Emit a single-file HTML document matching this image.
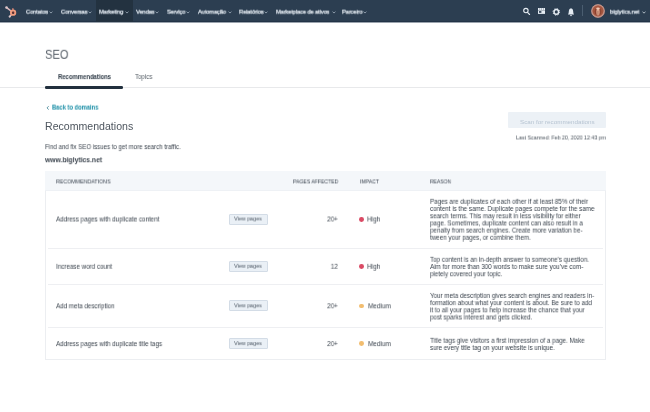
<!DOCTYPE html>
<html><head><meta charset="utf-8"><style>
html,body{margin:0;padding:0;width:650px;height:412px;overflow:hidden;background:#fff}
body{position:relative;font-family:"Liberation Sans",sans-serif;filter:blur(0.45px)}
.t{position:absolute;white-space:pre}
.b{position:absolute}
</style></head><body>
<div class="b" style="left:0px;top:0px;width:650px;height:22px;background:#2c3e51"></div>
<div class="b" style="left:0px;top:21px;width:650px;height:1px;background:#223346"></div>
<div class="b" style="left:0px;top:22px;width:650px;height:1px;background:#9aa3ad"></div>
<div class="b" style="left:96px;top:0px;width:36.7px;height:22px;background:#233240"></div>
<svg class="b" style="left:0px;top:0px" width="22" height="22" viewBox="0 0 22 22">
<g stroke-linecap="round">
<line x1="11.2" y1="11.2" x2="6.6" y2="7.6" stroke="#d9b8bd" stroke-width="1.5"/>
<line x1="11.8" y1="14.2" x2="9.8" y2="16.5" stroke="#d9bcc0" stroke-width="1.4"/>
<line x1="13" y1="10.2" x2="12.9" y2="8.6" stroke="#e08a78" stroke-width="1.3"/>
</g>
<circle cx="6.5" cy="7.5" r="1.3" fill="#dcc4c8"/>
<circle cx="9.7" cy="16.6" r="1.1" fill="#d8c4c8"/>
<circle cx="13.1" cy="12.7" r="2.2" fill="none" stroke="#f09a7c" stroke-width="1.9"/>
<circle cx="13.1" cy="12.7" r="0.9" fill="#7a2a22"/>
</svg>
<div class="t" style="left:26.00px;top:9.00px;font-size:6.2675px;line-height:6.2675px;font-weight:400;color:#e5ecf3;letter-spacing:-0.13px;-webkit-text-stroke:0.25px #e5ecf3;transform:translate3d(0,-0.40px,0) scaleX(0.9174);will-change:transform;transform-origin:left top;">Contatos</div>
<svg class="b" style="left:49.10px;top:10.6px" width="4" height="3" viewBox="0 0 4 3"><path d="M0.6 0.6 L2 2.1 L3.4 0.6" stroke="#aab8c6" stroke-width="0.75" fill="none"/></svg>
<div class="t" style="left:60.60px;top:9.00px;font-size:6.2675px;line-height:6.2675px;font-weight:400;color:#e5ecf3;letter-spacing:-0.13px;-webkit-text-stroke:0.25px #e5ecf3;transform:translate3d(0,-0.40px,0) scaleX(0.9174);will-change:transform;transform-origin:left top;">Conversas</div>
<svg class="b" style="left:87.50px;top:10.6px" width="4" height="3" viewBox="0 0 4 3"><path d="M0.6 0.6 L2 2.1 L3.4 0.6" stroke="#aab8c6" stroke-width="0.75" fill="none"/></svg>
<div class="t" style="left:98.90px;top:9.00px;font-size:6.2675px;line-height:6.2675px;font-weight:400;color:#e5ecf3;letter-spacing:-0.13px;-webkit-text-stroke:0.25px #e5ecf3;transform:translate3d(0,-0.40px,0) scaleX(0.9174);will-change:transform;transform-origin:left top;">Marketing</div>
<svg class="b" style="left:125.10px;top:10.6px" width="4" height="3" viewBox="0 0 4 3"><path d="M0.6 0.6 L2 2.1 L3.4 0.6" stroke="#aab8c6" stroke-width="0.75" fill="none"/></svg>
<div class="t" style="left:136.20px;top:9.00px;font-size:6.2675px;line-height:6.2675px;font-weight:400;color:#e5ecf3;letter-spacing:-0.13px;-webkit-text-stroke:0.25px #e5ecf3;transform:translate3d(0,-0.40px,0) scaleX(0.9174);will-change:transform;transform-origin:left top;">Vendas</div>
<svg class="b" style="left:155.10px;top:10.6px" width="4" height="3" viewBox="0 0 4 3"><path d="M0.6 0.6 L2 2.1 L3.4 0.6" stroke="#aab8c6" stroke-width="0.75" fill="none"/></svg>
<div class="t" style="left:167.10px;top:9.00px;font-size:6.2675px;line-height:6.2675px;font-weight:400;color:#e5ecf3;letter-spacing:-0.13px;-webkit-text-stroke:0.25px #e5ecf3;transform:translate3d(0,-0.40px,0) scaleX(0.9174);will-change:transform;transform-origin:left top;">Serviço</div>
<svg class="b" style="left:186.30px;top:10.6px" width="4" height="3" viewBox="0 0 4 3"><path d="M0.6 0.6 L2 2.1 L3.4 0.6" stroke="#aab8c6" stroke-width="0.75" fill="none"/></svg>
<div class="t" style="left:197.50px;top:9.00px;font-size:6.2675px;line-height:6.2675px;font-weight:400;color:#e5ecf3;letter-spacing:-0.13px;-webkit-text-stroke:0.25px #e5ecf3;transform:translate3d(0,-0.40px,0) scaleX(0.9174);will-change:transform;transform-origin:left top;">Automação</div>
<svg class="b" style="left:227.50px;top:10.6px" width="4" height="3" viewBox="0 0 4 3"><path d="M0.6 0.6 L2 2.1 L3.4 0.6" stroke="#aab8c6" stroke-width="0.75" fill="none"/></svg>
<div class="t" style="left:238.60px;top:9.00px;font-size:6.2675px;line-height:6.2675px;font-weight:400;color:#e5ecf3;letter-spacing:-0.13px;-webkit-text-stroke:0.25px #e5ecf3;transform:translate3d(0,-0.40px,0) scaleX(0.9174);will-change:transform;transform-origin:left top;">Relatórios</div>
<svg class="b" style="left:264.40px;top:10.6px" width="4" height="3" viewBox="0 0 4 3"><path d="M0.6 0.6 L2 2.1 L3.4 0.6" stroke="#aab8c6" stroke-width="0.75" fill="none"/></svg>
<div class="t" style="left:275.90px;top:9.00px;font-size:6.2675px;line-height:6.2675px;font-weight:400;color:#e5ecf3;letter-spacing:-0.13px;-webkit-text-stroke:0.25px #e5ecf3;transform:translate3d(0,-0.40px,0) scaleX(0.9174);will-change:transform;transform-origin:left top;">Marketplace de ativos</div>
<svg class="b" style="left:331.60px;top:10.6px" width="4" height="3" viewBox="0 0 4 3"><path d="M0.6 0.6 L2 2.1 L3.4 0.6" stroke="#aab8c6" stroke-width="0.75" fill="none"/></svg>
<div class="t" style="left:342.40px;top:9.00px;font-size:6.2675px;line-height:6.2675px;font-weight:400;color:#e5ecf3;letter-spacing:-0.13px;-webkit-text-stroke:0.25px #e5ecf3;transform:translate3d(0,-0.40px,0) scaleX(0.9174);will-change:transform;transform-origin:left top;">Parceiro</div>
<svg class="b" style="left:363.30px;top:10.6px" width="4" height="3" viewBox="0 0 4 3"><path d="M0.6 0.6 L2 2.1 L3.4 0.6" stroke="#aab8c6" stroke-width="0.75" fill="none"/></svg>
<svg class="b" style="left:520px;top:5px" width="14" height="14" viewBox="0 0 14 14"><circle cx="5.9" cy="5.6" r="2.2" stroke="#e5ecf3" stroke-width="1.1" fill="none"/><line x1="7.5" y1="7.3" x2="9.6" y2="9.5" stroke="#e5ecf3" stroke-width="1.1" stroke-linecap="round"/></svg>
<svg class="b" style="left:538px;top:8.2px" width="7.2" height="6" viewBox="0 0 7.2 6"><rect x="0" y="0" width="7.1" height="5.9" fill="#e5ecf3"/><rect x="1.3" y="0.5" width="0.8" height="1" fill="#2c3e51" opacity="0.7"/><rect x="3.2" y="0.5" width="0.8" height="1" fill="#2c3e51" opacity="0.7"/><rect x="5.1" y="0.5" width="0.8" height="1" fill="#2c3e51" opacity="0.7"/><rect x="0" y="2" width="7.1" height="0.6" fill="#2c3e51" opacity="0.5"/><rect x="1" y="3.1" width="2.4" height="1.7" fill="#2c3e51"/></svg>
<svg class="b" style="left:552px;top:8px" width="9" height="8" viewBox="0 0 9 8"><circle cx="4.3" cy="3.9" r="2.3" stroke="#e5ecf3" stroke-width="1.5" fill="none"/><circle cx="4.3" cy="3.9" r="3.3" stroke="#e5ecf3" stroke-width="1" stroke-dasharray="1.2 1.4" fill="none"/></svg>
<svg class="b" style="left:566.5px;top:7.5px" width="8" height="9" viewBox="0 0 8 9"><path d="M0.9 6.6 C1.8 5.8 1.7 4 1.9 2.8 C2.1 1.2 2.9 0.6 4 0.6 C5.1 0.6 5.9 1.2 6.1 2.8 C6.3 4 6.2 5.8 7.1 6.6 Z" fill="#e5ecf3"/><rect x="3.3" y="6.9" width="1.4" height="1.2" fill="#e5ecf3"/></svg>
<div class="b" style="left:582px;top:5px;width:0.8px;height:11px;background:#4a5d70"></div>
<svg class="b" style="left:590.7px;top:4.2px" width="14" height="14" viewBox="0 0 14 14"><circle cx="7" cy="7" r="6.8" fill="#b57a6c"/><circle cx="7" cy="7" r="6.3" fill="none" stroke="#dcbcb4" stroke-width="0.7" opacity="0.8"/><circle cx="7" cy="6.8" r="5.4" fill="#a5563f"/><ellipse cx="5" cy="7.5" rx="1.3" ry="3" fill="#8a3f2e"/><ellipse cx="9" cy="7.5" rx="1.3" ry="3" fill="#8f4632"/><ellipse cx="7" cy="7.8" rx="1.7" ry="3.6" fill="#dca58c"/><ellipse cx="7" cy="4.5" rx="1.8" ry="1.1" fill="#f2cab6"/><rect x="6.6" y="7" width="0.7" height="4" fill="#7a3a2a" opacity="0.6"/></svg>
<div class="t" style="left:609.60px;top:9.00px;font-size:6.2675px;line-height:6.2675px;font-weight:400;color:#e5ecf3;letter-spacing:-0.05px;-webkit-text-stroke:0.25px #e5ecf3;transform:translate3d(0,-0.40px,0) scaleX(0.9174);will-change:transform;transform-origin:left top;">biglytics.net</div>
<svg class="b" style="left:641.5px;top:10.8px" width="4" height="3" viewBox="0 0 4 3"><path d="M0.5 0.6 L2 2.2 L3.5 0.6" stroke="#e5ecf3" stroke-width="0.7" fill="none"/></svg>
<div class="t" style="left:45.40px;top:49.00px;font-size:12.096px;line-height:12.096px;font-weight:400;color:#555d66;transform:translate3d(0,-0.20px,0) scaleX(0.9259);will-change:transform;transform-origin:left top;">SEO</div>
<div class="t" style="left:57.70px;top:74.00px;font-size:6.6000000000000005px;line-height:6.6000000000000005px;font-weight:700;color:#2f3b47;letter-spacing:-0.05px;transform:translate3d(0,0.10px,0) scaleX(0.9091);will-change:transform;transform-origin:left top;">Recommendations</div>
<div class="t" style="left:135.00px;top:74.00px;font-size:6.71px;line-height:6.71px;font-weight:400;color:#5b636b;transform:translate3d(0,0.00px,0) scaleX(0.9091);will-change:transform;transform-origin:left top;">Topics</div>
<div class="b" style="left:0px;top:87px;width:650px;height:1px;background:#e8e9eb"></div>
<div class="b" style="left:45px;top:86.4px;width:77.6px;height:2.3px;background:#22303e;border-radius:1.2px"></div>
<div class="t" style="left:51.80px;top:105.00px;font-size:6.38px;line-height:6.38px;font-weight:700;color:#1a8ea6;transform:translate3d(0,-0.40px,0) scaleX(0.9091);will-change:transform;transform-origin:left top;">Back to domains</div>
<svg class="b" style="left:45.5px;top:104.5px" width="4" height="6" viewBox="0 0 4 6"><path d="M2.6 1.2 L1.1 2.9 L2.6 4.6" stroke="#4a8a9a" stroke-width="0.9" fill="none"/></svg>
<div class="t" style="left:45.30px;top:122.00px;font-size:10.176px;line-height:10.176px;font-weight:400;color:#4d555e;transform:translate3d(0,-0.30px,0) scaleX(1.0417);will-change:transform;transform-origin:left top;">Recommendations</div>
<div class="t" style="left:44.90px;top:144.00px;font-size:6.71px;line-height:6.71px;font-weight:400;color:#3a434d;transform:translate3d(0,0.10px,0) scaleX(0.9091);will-change:transform;transform-origin:left top;">Find and fix SEO issues to get more search traffic.</div>
<div class="t" style="left:44.90px;top:156.00px;font-size:7.48px;line-height:7.48px;font-weight:700;color:#3a434d;transform:translate3d(0,0.20px,0) scaleX(0.9091);will-change:transform;transform-origin:left top;">www.biglytics.net</div>
<div class="b" style="left:508.4px;top:112.4px;width:97.7px;height:16.0px;background:#ecf1f6;border-radius:1px"></div>
<div class="t" style="left:520.00px;top:119.00px;font-size:6.25px;line-height:6.25px;font-weight:400;color:#b7c4d2;transform:translate3d(0,-0.40px,0) scaleX(1.0000);will-change:transform;transform-origin:left top;">Scan for recommendations</div>
<div class="t" style="left:515.70px;top:136.00px;font-size:5.83px;line-height:5.83px;font-weight:400;color:#47505a;transform:translate3d(0,-0.50px,0) scaleX(0.9091);will-change:transform;transform-origin:left top;">Last Scanned: Feb 20, 2020 12:43 pm</div>
<div class="b" style="left:45px;top:170.5px;width:560.9px;height:189.2px;border:1px solid #eceef1;box-sizing:border-box;background:#fff"></div>
<div class="b" style="left:45px;top:170.5px;width:560.9px;height:19.3px;background:#f4f7fa"></div>
<div class="b" style="left:45px;top:189.5px;width:560.9px;height:0.8px;background:#eef1f5"></div>
<div class="t" style="left:55.80px;top:179.00px;font-size:5.936px;line-height:5.936px;font-weight:400;color:#3b4450;transform:translate3d(0,0.40px,0) scaleX(0.8929);will-change:transform;transform-origin:left top;">RECOMMENDATIONS</div>
<div class="t" style="left:293.30px;top:179.00px;font-size:5.712px;line-height:5.712px;font-weight:400;color:#3b4450;transform:translate3d(0,0.40px,0) scaleX(0.8929);will-change:transform;transform-origin:left top;">PAGES AFFECTED</div>
<div class="t" style="left:359.50px;top:179.00px;font-size:5.712px;line-height:5.712px;font-weight:400;color:#3b4450;transform:translate3d(0,0.40px,0) scaleX(0.8929);will-change:transform;transform-origin:left top;">IMPACT</div>
<div class="t" style="left:429.50px;top:179.00px;font-size:5.6000000000000005px;line-height:5.6000000000000005px;font-weight:400;color:#3b4450;transform:translate3d(0,0.40px,0) scaleX(0.8929);will-change:transform;transform-origin:left top;">REASON</div>
<div class="b" style="left:48px;top:248.2px;width:555px;height:1px;background:#eeeff2"></div>
<div class="b" style="left:48px;top:283.6px;width:555px;height:1px;background:#eeeff2"></div>
<div class="b" style="left:48px;top:327.4px;width:555px;height:1px;background:#eeeff2"></div>
<div class="t" style="left:56.00px;top:217.00px;font-size:6.875000000000001px;line-height:6.875000000000001px;font-weight:400;color:#3a434d;transform:translate3d(0,-0.50px,0) scaleX(0.9091);will-change:transform;transform-origin:left top;">Address pages with duplicate content</div>
<div class="b" style="left:228.6px;top:213.60000000000002px;width:39.4px;height:11.0px;background:#eaf0f6;border:0.6px solid #d3dce6;box-sizing:border-box;border-radius:1px"></div>
<div class="t" style="left:234.30px;top:216.00px;font-size:5.670000000000001px;line-height:5.670000000000001px;font-weight:400;color:#4f5a66;transform:translate3d(0,0.50px,0) scaleX(0.9524);will-change:transform;transform-origin:left top;">View pages</div>
<div class="t" style="right:312.20px;top:216.00px;font-size:7.040000000000001px;line-height:7.040000000000001px;font-weight:400;color:#3a434d;transform:translate3d(0,-0.50px,0) scaleX(0.9091);will-change:transform;transform-origin:right top;">20+</div>
<div class="b" style="left:358.90px;top:216.80px;width:4.8px;height:4.8px;border-radius:50%;background:#da4a64"></div>
<div class="t" style="left:367.10px;top:216.00px;font-size:7.040000000000001px;line-height:7.040000000000001px;font-weight:400;color:#3a434d;transform:translate3d(0,-0.50px,0) scaleX(0.9091);will-change:transform;transform-origin:left top;">High</div>
<div class="t" style="left:429.50px;top:199.00px;font-size:6.875000000000001px;line-height:6.875000000000001px;font-weight:400;color:#3a434d;transform:translate3d(0,-0.20px,0) scaleX(0.9091);will-change:transform;transform-origin:left top;">Pages are duplicates of each other if at least 85% of their</div>
<div class="t" style="left:429.50px;top:206.00px;font-size:6.875000000000001px;line-height:6.875000000000001px;font-weight:400;color:#3a434d;transform:translate3d(0,0.00px,0) scaleX(0.9091);will-change:transform;transform-origin:left top;">content is the same. Duplicate pages compete for the same</div>
<div class="t" style="left:429.50px;top:213.00px;font-size:6.875000000000001px;line-height:6.875000000000001px;font-weight:400;color:#3a434d;transform:translate3d(0,0.20px,0) scaleX(0.9091);will-change:transform;transform-origin:left top;">search terms. This may result in less visibility for either</div>
<div class="t" style="left:429.50px;top:220.00px;font-size:6.875000000000001px;line-height:6.875000000000001px;font-weight:400;color:#3a434d;transform:translate3d(0,0.40px,0) scaleX(0.9091);will-change:transform;transform-origin:left top;">page. Sometimes, duplicate content can also result in a</div>
<div class="t" style="left:429.50px;top:228.00px;font-size:6.875000000000001px;line-height:6.875000000000001px;font-weight:400;color:#3a434d;transform:translate3d(0,-0.40px,0) scaleX(0.9091);will-change:transform;transform-origin:left top;">penalty from search engines. Create more variation be-</div>
<div class="t" style="left:429.50px;top:235.00px;font-size:6.875000000000001px;line-height:6.875000000000001px;font-weight:400;color:#3a434d;transform:translate3d(0,-0.20px,0) scaleX(0.9091);will-change:transform;transform-origin:left top;">tween your pages, or combine them.</div>
<div class="t" style="left:56.00px;top:264.00px;font-size:6.875000000000001px;line-height:6.875000000000001px;font-weight:400;color:#3a434d;transform:translate3d(0,-0.20px,0) scaleX(0.9091);will-change:transform;transform-origin:left top;">Increase word count</div>
<div class="b" style="left:228.6px;top:260.90000000000003px;width:39.4px;height:11.0px;background:#eaf0f6;border:0.6px solid #d3dce6;box-sizing:border-box;border-radius:1px"></div>
<div class="t" style="left:234.30px;top:264.00px;font-size:5.670000000000001px;line-height:5.670000000000001px;font-weight:400;color:#4f5a66;transform:translate3d(0,-0.20px,0) scaleX(0.9524);will-change:transform;transform-origin:left top;">View pages</div>
<div class="t" style="right:312.20px;top:263.00px;font-size:7.040000000000001px;line-height:7.040000000000001px;font-weight:400;color:#3a434d;transform:translate3d(0,-0.20px,0) scaleX(0.9091);will-change:transform;transform-origin:right top;">12</div>
<div class="b" style="left:358.90px;top:264.10px;width:4.8px;height:4.8px;border-radius:50%;background:#da4a64"></div>
<div class="t" style="left:367.10px;top:263.00px;font-size:7.040000000000001px;line-height:7.040000000000001px;font-weight:400;color:#3a434d;transform:translate3d(0,-0.20px,0) scaleX(0.9091);will-change:transform;transform-origin:left top;">High</div>
<div class="t" style="left:429.50px;top:257.00px;font-size:6.875000000000001px;line-height:6.875000000000001px;font-weight:400;color:#3a434d;transform:translate3d(0,-0.20px,0) scaleX(0.9091);will-change:transform;transform-origin:left top;">Top content is an in-depth answer to someone’s question.</div>
<div class="t" style="left:429.50px;top:264.00px;font-size:6.875000000000001px;line-height:6.875000000000001px;font-weight:400;color:#3a434d;transform:translate3d(0,0.00px,0) scaleX(0.9091);will-change:transform;transform-origin:left top;">Aim for more than 300 words to make sure you’ve com-</div>
<div class="t" style="left:429.50px;top:271.00px;font-size:6.875000000000001px;line-height:6.875000000000001px;font-weight:400;color:#3a434d;transform:translate3d(0,0.20px,0) scaleX(0.9091);will-change:transform;transform-origin:left top;">pletely covered your topic.</div>
<div class="t" style="left:56.00px;top:303.00px;font-size:6.875000000000001px;line-height:6.875000000000001px;font-weight:400;color:#3a434d;transform:translate3d(0,0.30px,0) scaleX(0.9091);will-change:transform;transform-origin:left top;">Add meta description</div>
<div class="b" style="left:228.6px;top:300.40000000000003px;width:39.4px;height:11.0px;background:#eaf0f6;border:0.6px solid #d3dce6;box-sizing:border-box;border-radius:1px"></div>
<div class="t" style="left:234.30px;top:303.00px;font-size:5.670000000000001px;line-height:5.670000000000001px;font-weight:400;color:#4f5a66;transform:translate3d(0,0.30px,0) scaleX(0.9524);will-change:transform;transform-origin:left top;">View pages</div>
<div class="t" style="right:312.20px;top:302.00px;font-size:7.040000000000001px;line-height:7.040000000000001px;font-weight:400;color:#3a434d;transform:translate3d(0,0.30px,0) scaleX(0.9091);will-change:transform;transform-origin:right top;">20+</div>
<div class="b" style="left:358.90px;top:303.60px;width:4.8px;height:4.8px;border-radius:50%;background:#f2bd6f"></div>
<div class="t" style="left:368.40px;top:302.00px;font-size:7.040000000000001px;line-height:7.040000000000001px;font-weight:400;color:#3a434d;transform:translate3d(0,0.30px,0) scaleX(0.9091);will-change:transform;transform-origin:left top;">Medium</div>
<div class="t" style="left:429.50px;top:293.00px;font-size:6.875000000000001px;line-height:6.875000000000001px;font-weight:400;color:#3a434d;transform:translate3d(0,-0.10px,0) scaleX(0.9091);will-change:transform;transform-origin:left top;">Your meta description gives search engines and readers in-</div>
<div class="t" style="left:429.50px;top:300.00px;font-size:6.875000000000001px;line-height:6.875000000000001px;font-weight:400;color:#3a434d;transform:translate3d(0,0.10px,0) scaleX(0.9091);will-change:transform;transform-origin:left top;">formation about what your content is about. Be sure to add</div>
<div class="t" style="left:429.50px;top:307.00px;font-size:6.875000000000001px;line-height:6.875000000000001px;font-weight:400;color:#3a434d;transform:translate3d(0,0.30px,0) scaleX(0.9091);will-change:transform;transform-origin:left top;">it to all your pages to help increase the chance that your</div>
<div class="t" style="left:429.50px;top:315.00px;font-size:6.875000000000001px;line-height:6.875000000000001px;font-weight:400;color:#3a434d;transform:translate3d(0,-0.50px,0) scaleX(0.9091);will-change:transform;transform-origin:left top;">post sparks interest and gets clicked.</div>
<div class="t" style="left:56.00px;top:341.00px;font-size:6.875000000000001px;line-height:6.875000000000001px;font-weight:400;color:#3a434d;transform:translate3d(0,0.10px,0) scaleX(0.9091);will-change:transform;transform-origin:left top;">Address pages with duplicate title tags</div>
<div class="b" style="left:228.6px;top:338.20000000000005px;width:39.4px;height:11.0px;background:#eaf0f6;border:0.6px solid #d3dce6;box-sizing:border-box;border-radius:1px"></div>
<div class="t" style="left:234.30px;top:341.00px;font-size:5.670000000000001px;line-height:5.670000000000001px;font-weight:400;color:#4f5a66;transform:translate3d(0,0.10px,0) scaleX(0.9524);will-change:transform;transform-origin:left top;">View pages</div>
<div class="t" style="right:312.20px;top:340.00px;font-size:7.040000000000001px;line-height:7.040000000000001px;font-weight:400;color:#3a434d;transform:translate3d(0,0.10px,0) scaleX(0.9091);will-change:transform;transform-origin:right top;">20+</div>
<div class="b" style="left:358.90px;top:341.40px;width:4.8px;height:4.8px;border-radius:50%;background:#f2bd6f"></div>
<div class="t" style="left:368.40px;top:340.00px;font-size:7.040000000000001px;line-height:7.040000000000001px;font-weight:400;color:#3a434d;transform:translate3d(0,0.10px,0) scaleX(0.9091);will-change:transform;transform-origin:left top;">Medium</div>
<div class="t" style="left:429.50px;top:338.00px;font-size:6.875000000000001px;line-height:6.875000000000001px;font-weight:400;color:#3a434d;transform:translate3d(0,-0.20px,0) scaleX(0.9091);will-change:transform;transform-origin:left top;">Title tags give visitors a first impression of a page. Make</div>
<div class="t" style="left:429.50px;top:345.00px;font-size:6.875000000000001px;line-height:6.875000000000001px;font-weight:400;color:#3a434d;transform:translate3d(0,0.00px,0) scaleX(0.9091);will-change:transform;transform-origin:left top;">sure every title tag on your website is unique.</div>
</body></html>
